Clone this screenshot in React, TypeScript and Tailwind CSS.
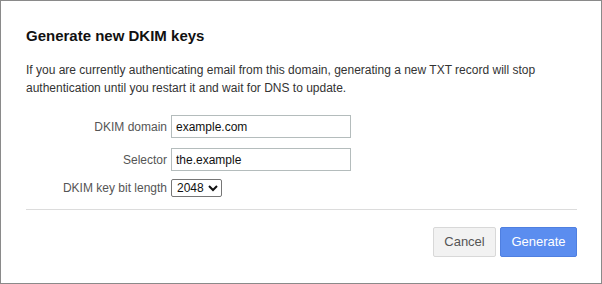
import React from 'react';

export default function App() {
  return (
    <div className="w-[602px] h-[284px] border border-[#8a8a8a] bg-white font-['Liberation_Sans',Arial,sans-serif] text-[#222]">
      <div className="pl-[25px] pr-[24px] pt-[25px]">
        <h2 className="text-[15px] leading-[20px] font-bold text-[#111]">Generate new DKIM keys</h2>
        <p className="mt-[15px] text-[12px] leading-[18px] text-[#333]">
          If you are currently authenticating email from this domain, generating a new TXT record will stop authentication until you restart it and wait for DNS to update.
        </p>

        {/* Form */}
        <div className="mt-[18px] grid grid-cols-[141px_180px] gap-x-[4px] gap-y-[10px] items-center text-[12px]">
          <label className="text-right text-[#555]">DKIM domain</label>
          <input
            defaultValue="example.com"
            className="h-[23px] border border-[#b4bcbc] px-[4px] text-[12px] text-[#111] outline-none"
          />
          <label className="text-right text-[#555]">Selector</label>
          <input
            defaultValue="the.example"
            className="h-[23px] border border-[#b4bcbc] px-[4px] text-[12px] text-[#111] outline-none"
          />
          <label className="-mt-[2px] text-right text-[#555]">DKIM key bit length</label>
          <div className="-mt-[2px]">
            <select
              defaultValue="2048"
              className="h-[18px] border border-[#767676] rounded-[2px] px-[1px] text-[12px] text-[#111] bg-white"
            >
              <option value="1024">1024</option>
              <option value="2048">2048</option>
            </select>
          </div>
        </div>

        <div className="mt-[12px] border-t border-[#dcdcdc]" />

        <div className="mt-[17px] flex justify-end gap-[4px]">
          <button className="h-[30px] w-[63px] border border-[#d8d8d8] rounded-[2px] bg-[#f2f2f2] text-[13px] text-[#555]">
            Cancel
          </button>
          <button className="h-[30px] w-[77px] border border-[#4f7fe0] rounded-[2px] bg-[#5b8def] text-[13px] text-white">
            Generate
          </button>
        </div>
      </div>
    </div>
  );
}
